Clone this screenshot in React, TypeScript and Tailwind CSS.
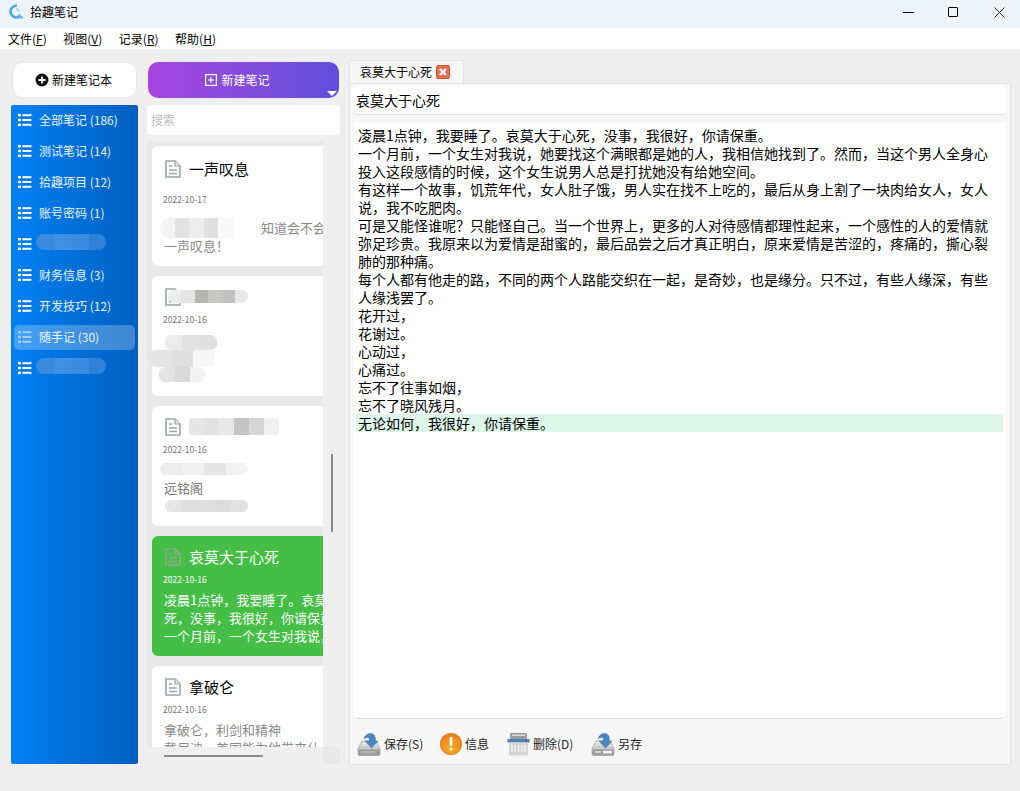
import React from "react";

const menus = [
  { name: "文件", key: "F" },
  { name: "视图", key: "V" },
  { name: "记录", key: "R" },
  { name: "帮助", key: "H" },
];

const notebooks = [
  { name: "全部笔记 (186)" },
  { name: "测试笔记 (14)" },
  { name: "拾趣项目 (12)" },
  { name: "账号密码 (1)" },
  { name: "", hidden: true },
  { name: "财务信息 (3)" },
  { name: "开发技巧 (12)" },
  { name: "随手记 (30)", active: true },
  { name: "", hidden: true },
];

const editorLines = [
  "凌晨1点钟，我要睡了。哀莫大于心死，没事，我很好，你请保重。",
  "一个月前，一个女生对我说，她要找这个满眼都是她的人，我相信她找到了。然而，当这个男人全身心",
  "投入这段感情的时候，这个女生说男人总是打扰她没有给她空间。",
  "有这样一个故事，饥荒年代，女人肚子饿，男人实在找不上吃的，最后从身上割了一块肉给女人，女人",
  "说，我不吃肥肉。",
  "可是又能怪谁呢？只能怪自己。当一个世界上，更多的人对待感情都理性起来，一个感性的人的爱情就",
  "弥足珍贵。我原来以为爱情是甜蜜的，最后品尝之后才真正明白，原来爱情是苦涩的，疼痛的，撕心裂",
  "肺的那种痛。",
  "每个人都有他走的路，不同的两个人路能交织在一起，是奇妙，也是缘分。只不过，有些人缘深，有些",
  "人缘浅罢了。",
  "花开过，",
  "花谢过。",
  "心动过，",
  "心痛过。",
  "忘不了往事如烟，",
  "忘不了晓风残月。",
];

const ListIcon = ({ faded }: { faded?: boolean }) => (
  <svg width="14" height="12" viewBox="0 0 14 12" className={`shrink-0 ${faded ? "opacity-50" : ""}`}>
    <g fill="#fff">
      <rect x="0" y="0" width="3" height="2.4" />
      <rect x="0" y="4.8" width="3" height="2.4" />
      <rect x="0" y="9.6" width="3" height="2.4" />
      <rect x="4.4" y="0.2" width="9" height="2" />
      <rect x="4.4" y="5" width="9" height="2" />
      <rect x="4.4" y="9.8" width="9" height="2" />
    </g>
  </svg>
);

const NoteIcon = () => (
  <svg width="16" height="18" viewBox="0 0 16 18" className="shrink-0">
    <path d="M1 1h9l5 5v11H1z" fill="#fff" stroke="#9aa6a6" strokeWidth="1.6" />
    <path d="M10 1v5h5" fill="#dfe4e4" stroke="#9aa6a6" strokeWidth="1.2" />
    <path d="M4 6h3M4 10h8M4 13.5h8" stroke="#9aa6a6" strokeWidth="1.4" />
  </svg>
);

const GreenNoteIcon = () => (
  <svg width="16" height="18" viewBox="0 0 16 18" className="shrink-0">
    <path d="M1 1h9l5 5v11H1z" fill="#45be46" stroke="#8fa98f" strokeWidth="1.6" />
    <path d="M10 1v5h5" fill="none" stroke="#8fa98f" strokeWidth="1.2" />
    <path d="M4 6h3M4 10h8M4 13.5h8" stroke="#8fa98f" strokeWidth="1.4" />
  </svg>
);

// the blurred-out bits of the screenshot
const Smudge = ({ className, cells }: { className: string; cells: string[] }) => (
  <div className={`absolute flex overflow-hidden rounded-full blur-[0.6px] ${className}`}>
    {cells.map((c, i) => (
      <div key={i} className="h-full flex-1" style={{ background: c }} />
    ))}
  </div>
);

const SaveIcon = ({ alt }: { alt?: boolean }) => (
  <svg width="24" height="24" viewBox="0 0 24 24" className="shrink-0">
    <defs>
      <linearGradient id={alt ? "trayB" : "trayA"} x1="0" y1="0" x2="0" y2="1">
        <stop offset="0" stopColor="#ececec" />
        <stop offset="1" stopColor="#a8a8a8" />
      </linearGradient>
    </defs>
    <path d="M5 9h14l4 8v5a1.5 1.5 0 0 1-1.5 1.5h-19A1.5 1.5 0 0 1 1 22v-5z" fill={`url(#${alt ? "trayB" : "trayA"})`} stroke="#8b8b8b" strokeWidth="0.6" />
    <path d="M1.5 17.5h21v5h-21z" fill="#9b9b9b" />
    {alt ? <rect x="12" y="18.8" width="9" height="2.6" fill="#f6f6f6" /> : <rect x="4" y="19.2" width="14" height="1.6" fill="#bbb" />}
    {alt && <rect x="4" y="19" width="6" height="2" fill="#d6d6d6" />}
    <path d="M7 7C8 2 14 0 17 3c1.500 1.500 1.500 4 1 6h3l-6.500 7L8 9h4c1-2 0-4-2-3.500C8.600 5.800 7.800 6.300 7 7z" fill="#4d86c5" stroke="#3f6ea3" strokeWidth="0.5" />
  </svg>
);

const InfoIcon = () => (
  <svg width="22" height="24" viewBox="0 0 22 24" className="shrink-0">
    <defs>
      <radialGradient id="orange" cx="0.5" cy="0.7" r="0.7">
        <stop offset="0" stopColor="#ffab2e" />
        <stop offset="1" stopColor="#ea7c10" />
      </radialGradient>
    </defs>
    <circle cx="11" cy="12" r="10.8" fill="url(#orange)" stroke="#c96a12" strokeWidth="0.5" />
    <rect x="9.600" y="5" width="2.800" height="9" rx="1.200" fill="#fff" />
    <circle cx="11" cy="17" r="1.600" fill="#fff" />
  </svg>
);

const DeleteIcon = () => (
  <svg width="23" height="24" viewBox="0 0 23 24" className="shrink-0">
    <rect x="3" y="1" width="17" height="6" rx="1" fill="#9a9a9a" />
    <rect x="5" y="2.500" width="13" height="1.500" fill="#d9d9d9" />
    <path d="M0.500 7h22v3.500H0.500z" fill="#4f7fb8" />
    <circle cx="19" cy="8.500" r="0.900" fill="#d9333a" />
    <path d="M2 10.500h19V22a1.500 1.500 0 0 1-1.500 1.500h-16A1.500 1.500 0 0 1 2 22z" fill="#d4d4d4" />
    <path d="M5 13v7M8 13v7M11.500 13v7M15 13v7M18 13v7" stroke="#f2f2f2" strokeWidth="1.400" />
  </svg>
);

const Card = ({
  title,
  date,
  body,
  first,
  active,
  children,
}: {
  title?: string;
  date: string;
  body?: React.ReactNode;
  first?: boolean;
  active?: boolean;
  children?: React.ReactNode;
}) => (
  <div className={`relative h-[120px] w-[190px] shrink-0 rounded-[6px] pl-[12px] ${active ? "bg-[#45be46] text-white" : "bg-white"}`}>
    <div className={`flex h-[20px] items-center gap-[8px] pl-px ${first ? "mt-[13px]" : "mt-[11px]"}`}>
      {active ? <GreenNoteIcon /> : <NoteIcon />}
      <span className="text-[15px] leading-[20px]">{title}</span>
    </div>
    <div className={`-ml-px text-[8.5px] leading-[12px] ${first ? "mt-[14px]" : "mt-[6px]"} ${active ? "text-white" : "text-[#777]"}`}>{date}</div>
    <div className={`whitespace-nowrap text-[13px] leading-[18px] ${first ? "mt-[14px]" : "mt-[6px]"} ${active ? "text-white" : "text-[#8a8a8a]"}`}>{body}</div>
    {children}
  </div>
);

const ToolButton = ({ icon, label, className }: { icon: React.ReactNode; label: string; className: string }) => (
  <div className={`flex items-center gap-[3px] text-[12px] text-[#222] ${className}`}>
    {icon}
    <span>{label}</span>
  </div>
);

export default function App() {
  return (
    <div className="flex h-[791px] w-[1020px] flex-col overflow-hidden bg-[#efefef] font-['Noto_Sans_CJK_SC',sans-serif] text-black">
      {/* title bar */}
      <div className="flex h-[28px] shrink-0 items-center bg-[#eef2f9] pb-[4px]">
        <svg width="16" height="16" viewBox="0 0 16 16" className="ml-[8px]">
          <path d="M9 1.500A6 6 0 1 0 12.500 12" fill="none" stroke="#4aa8ee" strokeWidth="2.600" />
          <path d="M8 4a3.600 3.600 0 0 1 3.500 4L9 7z" fill="#9fd6f7" />
          <path d="M10.500 10.500l4 4" stroke="#58b4f0" strokeWidth="2.200" />
        </svg>
        <span className="ml-[6px] text-[12px]">拾趣笔记</span>
        <div className="ml-auto flex items-center">
          <div className="h-px w-[11px] bg-black" />
          <div className="ml-[34px] h-[10px] w-[10px] rounded-[1px] border border-black" />
          <svg width="11" height="11" viewBox="0 0 11 11" className="ml-[36px] mr-[15px]">
            <path d="M0.500 0.500l10 10M10.500 0.500l-10 10" stroke="#222" strokeWidth="1" />
          </svg>
        </div>
      </div>

      {/* menu */}
      <div className="flex h-[21px] shrink-0 items-center gap-[16.5px] bg-white pl-[8px] text-[12px]">
        {menus.map((m) => (
          <span key={m.key}>
            {m.name}(<span className="underline">{m.key}</span>)
          </span>
        ))}
      </div>

      <div className="flex flex-1 pl-[11px] pt-[13px]">
        {/* notebooks */}
        <div className="flex w-[127px] shrink-0 flex-col">
          <div className="mx-px flex h-[36px] items-center justify-center gap-[3px] rounded-[10px] border border-[#e6e6e6] bg-white pr-[2px] text-[12px]">
            <svg width="14" height="14" viewBox="0 0 14 14">
              <circle cx="7" cy="7" r="6.500" fill="#111" />
              <path d="M7 3.500v7M3.500 7h7" stroke="#fff" strokeWidth="1.800" />
            </svg>
            新建笔记本
          </div>
          <div className="mt-[7px] h-[659px] rounded-[2px] bg-gradient-to-r from-[#0081f3] to-[#005fc0] px-[3px] pt-[3px] text-[12px] text-white">
            {notebooks.map((n, i) => (
              <div
                key={i}
                className={`relative mb-[6px] flex h-[25px] items-center gap-[7px] rounded-[5px] pb-[1px] pl-[4px] ${n.active ? "bg-white/25" : ""}`}
              >
                <ListIcon faded={n.active} />
                <span className="text-[#eaf3ff]">{n.name}</span>
                {n.hidden && <Smudge className="left-[22px] top-[2px] h-[16px] w-[70px]" cells={["#3a8be0", "#3f90e4", "#3a8ce2", "#2f80d8"]} />}
              </div>
            ))}
          </div>
        </div>

        {/* notes */}
        <div className="ml-[9px] flex w-[193px] shrink-0 flex-col">
          <div className="relative mx-px flex h-[36px] items-center justify-center gap-[4px] overflow-hidden rounded-[10px] bg-gradient-to-r from-[#a644df] to-[#5f4fdc] pr-[12px] text-[12px] text-white">
            <svg width="12" height="12" viewBox="0 0 12 12">
              <rect x="0.600" y="0.600" width="10.800" height="10.800" fill="none" stroke="#fff" strokeWidth="1.200" />
              <path d="M6 3v6M3 6h6" stroke="#fff" strokeWidth="1.200" />
            </svg>
            新建笔记
            <div className="absolute bottom-[2px] right-[2px] h-0 w-0 border-x-[5px] border-t-[5px] border-x-transparent border-t-white" />
          </div>
          <div className="mt-[7px] flex h-[30px] items-center rounded-[4px] bg-white pl-[4px] text-[12px] text-[#bdbdbd]">搜索</div>
          <div className="mt-[6px] flex h-[606px]">
            <div className="flex w-[176px] flex-col gap-[10px] overflow-hidden bg-[#e8e8e8] pl-[5px] pt-[5px]">
              <Card
                first
                title="一声叹息"
                date="2022-10-17"
                body={
                  <>
                    <div className="pl-[84px]">不知道会不会</div>
                    <div>一声叹息！</div>
                  </>
                }
              >
                <Smudge className="left-[8px] top-[72px] h-[20px] w-[102px]" cells={["#f4f4f4", "#e2e2e2", "#ececec", "#e0e0e0", "#f8f8f8", "#fff", "#fff"]} />
              </Card>
              <Card title="" date="2022-10-16">
                <Smudge className="left-[16px] top-[14px] h-[13px] w-[80px]" cells={["#eceeee", "#e4e4e4", "#b8b6b4", "#c8c7c5", "#c4c2c0", "#e8e8e8"]} />
                <Smudge className="left-[13px] top-[59px] h-[15px] w-[52px] !rounded-md" cells={["#ececec", "#e2e2e2", "#e0e0e0"]} />
                <Smudge className="left-[-2px] top-[74px] h-[17px] w-[65px] !rounded-md" cells={["#e4e4e4", "#e0e0e0", "#f6f6f6"]} />
                <Smudge className="left-[7px] top-[91px] h-[15px] w-[46px] !rounded-md" cells={["#e4e4e4", "#dadada", "#f2f2f2"]} />
              </Card>
              <Card title="" date="2022-10-16" body={<div className="pt-[18px] text-[#777]">远铭阁</div>}>
                <Smudge className="left-[37px] top-[12px] h-[17px] w-[90px] !rounded-sm" cells={["#e6e6e6", "#e2e2e2", "#e8e8e8", "#c4c4c4", "#d6d6d6", "#f0f0f0"]} />
                <Smudge className="left-[8px] top-[57px] h-[12px] w-[88px]" cells={["#ececec", "#f0f0f0", "#e6e6e6", "#f2f2f2"]} />
                <Smudge className="left-[13px] top-[94px] h-[12px] w-[83px]" cells={["#e4e4e4", "#dedede", "#e0e0e0", "#dcdcdc", "#e2e2e2"]} />
              </Card>
              <Card
                active
                title="哀莫大于心死"
                date="2022-10-16"
                body={
                  <>
                    <div>凌晨1点钟，我要睡了。哀莫大</div>
                    <div>死，没事，我很好，你请保重。</div>
                    <div>一个月前，一个女生对我说，</div>
                  </>
                }
              />
              <Card
                title="拿破仑"
                date="2022-10-16"
                body={
                  <>
                    <div>拿破仑，利剑和精神</div>
                    <div>戴尼迪，美国能为他带来什</div>
                  </>
                }
              />
            </div>
            <div className="w-[17px]">
              <div className="ml-[8px] mt-[313px] h-[78px] w-[2px] bg-[#8a8a8a]" />
            </div>
          </div>
          <div className="flex h-[17px]">
            <div className="w-[176px] pl-[17px] pt-[8px]">
              <div className="h-[2px] w-[99px] bg-[#8a8a8a]" />
            </div>
            <div className="h-[17px] w-[17px] bg-[#e8e8e8]" />
          </div>
        </div>

        {/* editor */}
        <div className="-mt-[2px] ml-[9px] flex w-[662px] shrink-0 flex-col">
          <div className="flex h-[23px] w-[115px] items-center rounded-t-[2px] border border-b-0 border-[#e2e2e2] bg-[#f7f7f7] pl-[10px] text-[12px]">
            哀莫大于心死
            <svg width="14" height="14" viewBox="0 0 14 14" className="ml-[4px]">
              <rect x="0.500" y="0.500" width="13" height="13" rx="1.500" fill="#e2704f" stroke="#c9583a" />
              <path d="M4 4l6 6M10 4l-6 6" stroke="#fff" strokeWidth="2.200" />
            </svg>
          </div>
          <div className="h-[682px] border border-[#e2e2e2] bg-[#f7f7f7] pl-[2px] pr-[4px] pt-[2px]">
            <div className="flex h-[29px] items-center rounded-[5px] border-b border-[#dcdcdc] bg-white pl-[4px] text-[14px]">哀莫大于心死</div>
            <div className="ml-px mt-[8px] h-[596px] rounded-b-[5px] border-b border-[#dcdcdc] bg-white pt-[3px] text-[14px] leading-[18px]">
              {editorLines.map((l, i) => (
                <div key={i} className="h-[18px] whitespace-nowrap pl-[5px]">
                  {l}
                </div>
              ))}
              <div className="ml-[3px] mr-[3px] h-[18px] whitespace-nowrap bg-[#def6ea] pl-[2px]">无论如何，我很好，你请保重。</div>
            </div>
            <div className="flex h-[46px] items-center pl-[5px] pt-[3px]">
              <ToolButton icon={<SaveIcon />} label="保存(S)" className="w-[83px]" />
              <ToolButton icon={<InfoIcon />} label="信息" className="w-[67px]" />
              <ToolButton icon={<DeleteIcon />} label="删除(D)" className="w-[84px]" />
              <ToolButton icon={<SaveIcon alt />} label="另存" className="w-[80px]" />
            </div>
          </div>
        </div>
      </div>
    </div>
  );
}
